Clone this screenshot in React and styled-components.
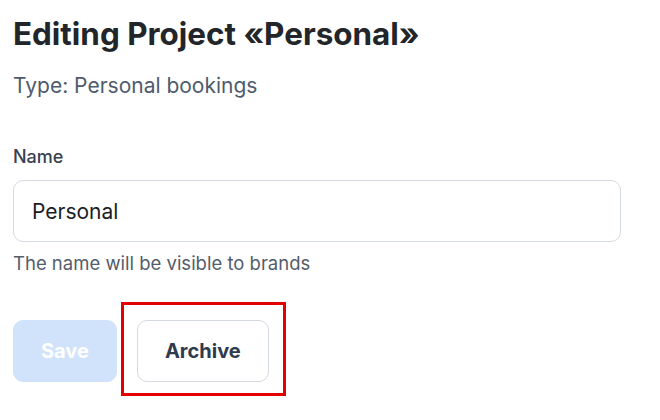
import React from "react";
import styled, { createGlobalStyle } from "styled-components";

const Global = createGlobalStyle`
  html, body { margin: 0; padding: 0; background: #fff; }
  body { font-family: Inter, "Noto Sans", sans-serif; }
  * { box-sizing: border-box; }
`;

const Page = styled.div`
  min-height: 420px;
  padding: 15px 39px 0 13px;
  display: flex;
  flex-direction: column;
`;

const Title = styled.h1`
  margin: 0;
  font-size: 31.4px;
  line-height: 38px;
  font-weight: 700;
  color: #222529;
`;

const Subtitle = styled.p`
  margin: 19px 0 0;
  font-size: 21px;
  line-height: 28px;
  color: #4f5b6d;
`;

const Field = styled.div`
  margin-top: 45px;
  display: flex;
  flex-direction: column;
`;

const Label = styled.label`
  font-size: 18px;
  line-height: 24px;
  font-weight: 500;
  color: #374151;
`;

const Input = styled.input`
  margin-top: 11px;
  height: 62px;
  width: 100%;
  border: 1px solid #d5d9e0;
  border-radius: 10px;
  padding: 0 18px;
  font-family: inherit;
  font-size: 21px;
  color: #1a1d23;
  outline: none;
`;

const Help = styled.div`
  margin-top: 9px;
  font-size: 18.5px;
  line-height: 24px;
  color: #545d6b;
`;

const Actions = styled.div`
  margin-top: 45px;
  display: flex;
  align-items: flex-start;
  gap: 20px;
`;

const Button = styled.button`
  height: 62px;
  padding: 0 ${(p) => p.$px}px;
  border-radius: 10px;
  font-family: inherit;
  font-size: 20px;
  font-weight: 700;
  cursor: pointer;
  border: 1px solid ${(p) => (p.$primary ? "#d1e3fb" : "#d5d9e0")};
  background: ${(p) => (p.$primary ? "#d1e3fb" : "#fff")};
  color: ${(p) => (p.$primary ? "#fff" : "#2f3a4d")};
`;

const Highlight = styled.div`
  position: relative;
  display: flex;
`;

const Ring = styled.div`
  position: absolute;
  left: -16px;
  top: -18px;
  right: -17px;
  bottom: -14px;
  border: 3px solid #e30000;
  pointer-events: none;
`;

export default function App() {
  return (
    <>
      <Global />
      <Page>
        <Title>Editing Project «Personal»</Title>
        <Subtitle>Type: Personal bookings</Subtitle>
        <Field>
          <Label htmlFor="name">Name</Label>
          <Input id="name" defaultValue="Personal" />
          <Help>The name will be visible to brands</Help>
        </Field>
        <Actions>
          <Button $primary $px={27} disabled>
            Save
          </Button>
          <Highlight>
            <Button $px={27}>Archive</Button>
            <Ring />
          </Highlight>
        </Actions>
      </Page>
    </>
  );
}
